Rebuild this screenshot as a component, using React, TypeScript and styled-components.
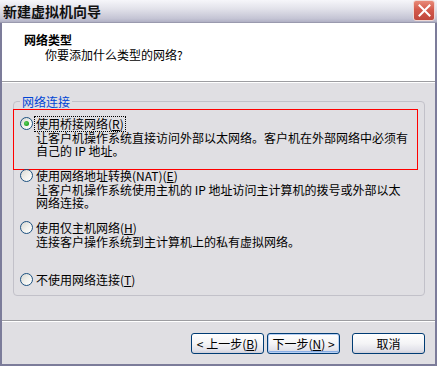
import React from "react";
import styled, { createGlobalStyle } from "styled-components";

const GlobalStyle = createGlobalStyle`
  body {
    margin: 0;
    background: #ffffff;
  }
  * {
    box-sizing: border-box;
  }
`;

const FONT = `"Noto Sans CJK SC", "Liberation Sans", sans-serif`;

type Option = {
  title: string;
  key: string;
  desc: string[];
  checked?: boolean;
};

const options: Option[] = [
  {
    title: "使用桥接网络",
    key: "R",
    desc: [
      "让客户机操作系统直接访问外部以太网络。客户机在外部网络中必须有",
      "自己的 IP 地址。",
    ],
    checked: true,
  },
  {
    title: "使用网络地址转换(NAT)",
    key: "E",
    desc: [
      "让客户机操作系统使用主机的 IP 地址访问主计算机的拨号或外部以太",
      "网络连接。",
    ],
  },
  {
    title: "使用仅主机网络",
    key: "H",
    desc: ["连接客户操作系统到主计算机上的私有虚拟网络。"],
  },
  {
    title: "不使用网络连接",
    key: "T",
    desc: [],
  },
];

const App: React.FC = () => {
  return (
    <>
      <GlobalStyle />
      <Window>
        <TitleBar>
          <TitleText>新建虚拟机向导</TitleText>
          <CloseButton>
            <svg width="13" height="13" viewBox="0 0 13 13">
              <path
                d="M1.5 1.5 L11.5 11.5 M11.5 1.5 L1.5 11.5"
                stroke="#ffffff"
                strokeWidth="2"
                strokeLinecap="square"
              />
            </svg>
          </CloseButton>
        </TitleBar>
        <Frame>
          <Header>
            <HeaderTitle>网络类型</HeaderTitle>
            <HeaderSub>你要添加什么类型的网络?</HeaderSub>
          </Header>
          <Body>
            <GroupBox>
              <Legend>网络连接</Legend>
              <Highlight />
              <OptionList>
                {options.map((o, i) => (
                  <OptionBlock key={i}>
                    <OptionRow>
                      <Radio $checked={!!o.checked} />
                      <Label $focused={!!o.checked}>
                        {o.title}(<U>{o.key}</U>)
                      </Label>
                    </OptionRow>
                    {o.desc.map((line, j) => (
                      <Desc key={j}>{line}</Desc>
                    ))}
                  </OptionBlock>
                ))}
              </OptionList>
            </GroupBox>
          </Body>
          <Footer>
            <Button>
              &lt; 上一步(<U>B</U>)
            </Button>
            <Button $default>
              下一步(<U>N</U>) &gt;
            </Button>
            <CancelButton>取消</CancelButton>
          </Footer>
        </Frame>
      </Window>
    </>
  );
};

const Window = styled.div`
  width: 437px;
  height: 366px;
  display: flex;
  flex-direction: column;
  background: #e0dfe3;
  font-family: ${FONT};
  font-size: 12px;
  color: #000;
  overflow: hidden;
`;

const TitleBar = styled.div`
  height: 23px;
  flex: none;
  display: flex;
  align-items: center;
  justify-content: space-between;
  padding: 0 2px 0 3px;
  background: linear-gradient(#f6f6fa 0%, #e2e2ea 40%, #c4c4d4 85%, #b0b0c4 100%);
  border-bottom: 1px solid #9a9aae;
`;

const TitleText = styled.span`
  font-size: 14px;
  font-weight: 700;
  line-height: 20px;
  color: #111;
  margin-top: -1px;
`;

const CloseButton = styled.div`
  width: 22px;
  height: 21px;
  margin-top: -2px;
  display: flex;
  align-items: center;
  justify-content: center;
  border: 1px solid #f0d8d4;
  border-radius: 3px;
  background: linear-gradient(#e88a78 0%, #d35a4c 45%, #c0473c 100%);
`;

const Frame = styled.div`
  flex: 1;
  display: flex;
  flex-direction: column;
  border: 2px solid #7c7c9a;
  border-top: none;
`;

const Header = styled.div`
  height: 59px;
  flex: none;
  background: #ffffff;
  border-bottom: 1px solid #9d9da1;
  padding: 9px 0 0 22px;
`;

const HeaderTitle = styled.div`
  font-weight: 700;
  line-height: 15px;
`;

const HeaderSub = styled.div`
  margin: 0 0 0 21px;
  line-height: 15px;
`;

const Body = styled.div`
  flex: 1;
  border-top: 1px solid #ffffff;
  padding: 18px 10px 0 11px;
`;

const GroupBox = styled.div`
  position: relative;
  height: 195px;
  border: 1px solid #c2c1c9;
  border-radius: 4px;
  padding: 14px 6px 0 6px;
`;

const Legend = styled.span`
  position: absolute;
  top: -8px;
  left: 6px;
  padding: 0 2px;
  line-height: 15px;
  color: #0046d5;
  background: #e0dfe3;
`;

const Highlight = styled.div`
  position: absolute;
  left: -1px;
  top: 7px;
  width: 405px;
  height: 61px;
  border: 1px solid #ff0000;
  pointer-events: none;
`;

const OptionList = styled.div`
  display: grid;
  grid-auto-rows: 52px;
`;

const OptionBlock = styled.div`
  display: flex;
  flex-direction: column;
`;

const OptionRow = styled.div`
  display: flex;
  align-items: center;
  height: 15px;
`;

const Radio = styled.span<{ $checked: boolean }>`
  position: relative;
  width: 13px;
  height: 13px;
  flex: none;
  border-radius: 50%;
  border: 1px solid #1c5180;
  background: linear-gradient(135deg, #d8d8d2 0%, #f2f2ee 55%, #ffffff 100%);
  margin-right: 2px;

  &::after {
    content: "";
    display: ${(p) => (p.$checked ? "block" : "none")};
    position: absolute;
    left: 3px;
    top: 3px;
    width: 5px;
    height: 5px;
    border-radius: 50%;
    background: radial-gradient(circle at 40% 40%, #5ed25e 0%, #21a121 70%, #1a8a1a 100%);
  }
`;

const Label = styled.span<{ $focused: boolean }>`
  padding: 0 1px;
  line-height: 14px;
  outline: ${(p) => (p.$focused ? "1px dotted #000" : "none")};
  outline-offset: 0;
`;

const U = styled.span`
  text-decoration: underline;
`;

const Desc = styled.div`
  margin-left: 16px;
  line-height: 13px;
  white-space: nowrap;
`;

const Footer = styled.div`
  height: 44px;
  flex: none;
  border-top: 1px solid #9d9da1;
  box-shadow: inset 0 1px 0 #ffffff;
  display: flex;
  justify-content: flex-end;
  align-items: flex-start;
  padding: 12px 10px 0 0;
`;

const Button = styled.button<{ $default?: boolean }>`
  width: 73px;
  height: 21px;
  margin-left: 3px;
  padding: 0;
  font-family: ${FONT};
  font-size: 12px;
  line-height: 19px;
  color: #000;
  border: 1px solid #003c74;
  border-radius: 3px;
  background: linear-gradient(#ffffff 0%, #f4f4f6 50%, #e2e2ea 85%, #cfcfd9 100%);
  box-shadow: ${(p) =>
    p.$default ? "inset 0 0 0 1px #b8d0f4, inset 0 -1px 0 1px #89aee4" : "none"};
`;

const CancelButton = styled(Button)`
  margin-left: 12px;
`;

export default App;
